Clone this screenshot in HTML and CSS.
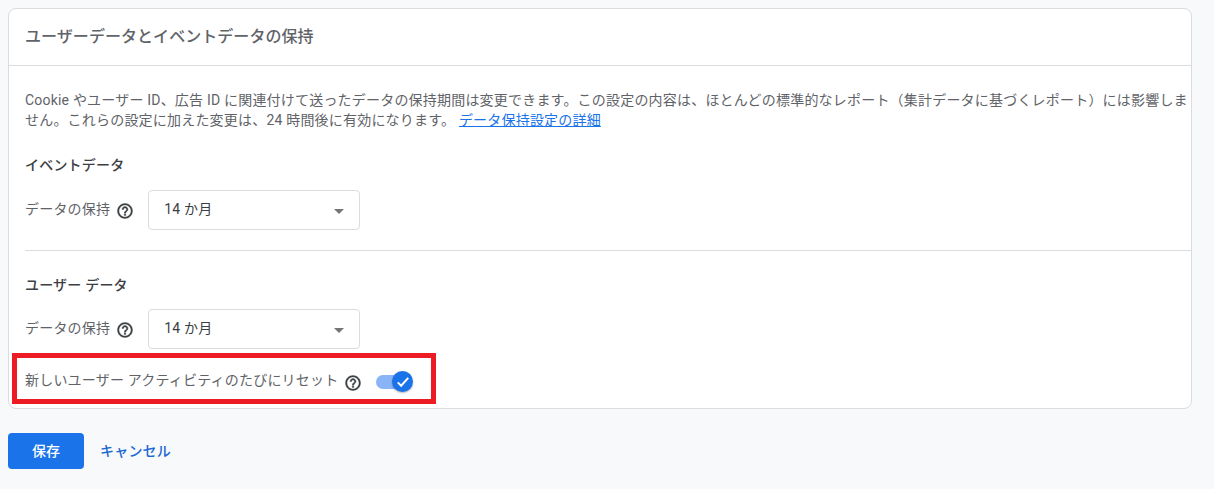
FILE: index.html
```html
<!DOCTYPE html>
<html lang="ja">
<head>
<meta charset="utf-8">
<title>データ保持</title>
<link rel="stylesheet" href="styles.css">
</head>
<body>
<section class="card">
  <h2 class="card-title">ユーザーデータとイベントデータの保持</h2>
  <div class="card-body">
    <p class="intro">Cookie やユーザー ID、広告 ID に関連付けて送ったデータの保持期間は変更できます。この設定の内容は、ほとんどの標準的なレポート（集計データに基づくレポート）には影響しません。これらの設定に加えた変更は、24 時間後に有効になります。 <a href="#" class="link">データ保持設定の詳細</a></p>
    <h3 class="sub event">イベントデータ</h3>
    <div class="row">
      <span class="label">データの保持</span>
      <svg class="help" viewBox="0 0 24 24"><path d="M11 18h2v-2h-2v2zm1-16C6.48 2 2 6.48 2 12s4.48 10 10 10 10-4.48 10-10S17.52 2 12 2zm0 18c-4.41 0-8-3.59-8-8s3.59-8 8-8 8 3.59 8 8-3.59 8-8 8zm0-14c-2.21 0-4 1.79-4 4h2c0-1.1.9-2 2-2s2 .9 2 2c0 2-3 1.75-3 5h2c0-2.25 3-2.5 3-5 0-2.21-1.79-4-4-4z"/></svg>
      <div class="select"><span class="value">14 か月</span><i class="caret"></i></div>
    </div>
    <hr class="divider">
    <h3 class="sub user">ユーザー データ</h3>
    <div class="row second">
      <span class="label">データの保持</span>
      <svg class="help" viewBox="0 0 24 24"><path d="M11 18h2v-2h-2v2zm1-16C6.48 2 2 6.48 2 12s4.48 10 10 10 10-4.48 10-10S17.52 2 12 2zm0 18c-4.41 0-8-3.59-8-8s3.59-8 8-8 8 3.59 8 8-3.59 8-8 8zm0-14c-2.21 0-4 1.79-4 4h2c0-1.1.9-2 2-2s2 .9 2 2c0 2-3 1.75-3 5h2c0-2.25 3-2.5 3-5 0-2.21-1.79-4-4-4z"/></svg>
      <div class="select"><span class="value">14 か月</span><i class="caret"></i></div>
    </div>
    <div class="reset-row">
      <span class="label">新しいユーザー アクティビティのたびにリセット</span>
      <svg class="help" viewBox="0 0 24 24"><path d="M11 18h2v-2h-2v2zm1-16C6.48 2 2 6.48 2 12s4.48 10 10 10 10-4.48 10-10S17.52 2 12 2zm0 18c-4.41 0-8-3.59-8-8s3.59-8 8-8 8 3.59 8 8-3.59 8-8 8zm0-14c-2.21 0-4 1.79-4 4h2c0-1.1.9-2 2-2s2 .9 2 2c0 2-3 1.75-3 5h2c0-2.25 3-2.5 3-5 0-2.21-1.79-4-4-4z"/></svg>
      <div class="toggle">
        <span class="track"></span>
        <span class="thumb"><svg viewBox="0 0 24 24"><path d="M5 12.5l4.5 4.5 9.5-10.5" fill="none" stroke="#fff" stroke-width="2.6"/></svg></span>
      </div>
    </div>
  </div>
  <div class="highlight"></div>
</section>
<div class="actions">
  <button class="save">保存</button>
  <button class="cancel">キャンセル</button>
</div>
</body>
</html>
```
FILE: styles.css
```css
* { box-sizing: border-box; }
html, body { height: 100%; }
body {
  margin: 0;
  padding: 8px 22px 0 8px;
  background: #f8f9fa;
  color: #5f6368;
  font-family: Roboto, "Noto Sans CJK JP", sans-serif;
  font-size: 14px;
  letter-spacing: .2px;
  overflow: hidden;
}
.card {
  position: relative;
  height: 401px;
  background: #fff;
  border: 1px solid #dadce0;
  border-radius: 8px;
}
.card-title {
  margin: 0;
  height: 57px;
  padding: 0 16px 4px;
  display: flex;
  align-items: center;
  border-bottom: 1px solid #dadce0;
  font-size: 16px;
  font-weight: 500;
  letter-spacing: .05px;
  color: #5f6368;
}
.card-body { padding: 24px 0 0 16px; }
.intro {
  margin: 0;
  line-height: 20px;
  height: 40px;
}
.link { color: #1a73e8; }
.sub {
  margin: 0;
  font-size: 14px;
  font-weight: 500;
  line-height: 20px;
  color: #3c4043;
}
.sub.event { margin-top: 25px; }
.sub.user { margin-top: 24px; }
.row {
  display: flex;
  align-items: center;
  height: 40px;
  margin-top: 15px;
}
.row.second { margin-top: 14px; }
.label { line-height: 20px; padding-bottom: 3px; }
.value { padding-bottom: 4px; }
.help {
  width: 18px;
  height: 18px;
  margin-left: 6px;
  flex: none;
  fill: #3c4043;
  stroke: #3c4043;
  stroke-width: .5;
  position: relative;
  top: 1px;
}
.select {
  margin-left: 14px;
  width: 212px;
  height: 40px;
  border: 1px solid #dadce0;
  border-radius: 4px;
  display: flex;
  align-items: center;
  justify-content: space-between;
  padding: 0 15px;
  color: #3c4043;
}
.caret {
  width: 0;
  height: 0;
  border-left: 5px solid transparent;
  border-right: 5px solid transparent;
  border-top: 5px solid #757575;
  margin-top: 2px;
}
.divider {
  margin: 20px 0 0;
  border: 0;
  border-top: 1px solid #dadce0;
}
.reset-row {
  display: flex;
  align-items: center;
  height: 40px;
  margin-top: 13px;
}
.reset-row .label { padding-bottom: 4px; }
.toggle {
  position: relative;
  width: 38px;
  height: 22px;
  margin-left: 13px;
}
.track {
  position: absolute;
  left: 1px;
  top: 4px;
  width: 34px;
  height: 14px;
  border-radius: 7px;
  background: #8ab4f8;
}
.thumb {
  position: absolute;
  right: 0;
  top: 0;
  width: 21px;
  height: 21px;
  border-radius: 50%;
  background: #1a73e8;
  box-shadow: 0 1px 2px rgba(60,64,67,.4);
  display: flex;
  align-items: center;
  justify-content: center;
}
.thumb svg { width: 18px; height: 18px; }
.highlight {
  position: absolute;
  left: 3px;
  top: 344px;
  width: 424px;
  height: 51px;
  border: 5px solid #ed1c24;
  pointer-events: none;
}
.actions {
  display: flex;
  align-items: center;
  margin-top: 24px;
}
.save {
  width: 76px;
  height: 36px;
  padding: 0 0 2px;
  border: 0;
  border-radius: 4px;
  background: #1a73e8;
  color: #fff;
  font: 500 14px Roboto, "Noto Sans CJK JP", sans-serif;
}
.cancel {
  margin-left: 8px;
  height: 36px;
  padding: 0 8px 2px;
  border: 0;
  background: none;
  color: #1967d2;
  letter-spacing: .2px;
  font: 500 14px Roboto, "Noto Sans CJK JP", sans-serif;
}
```
